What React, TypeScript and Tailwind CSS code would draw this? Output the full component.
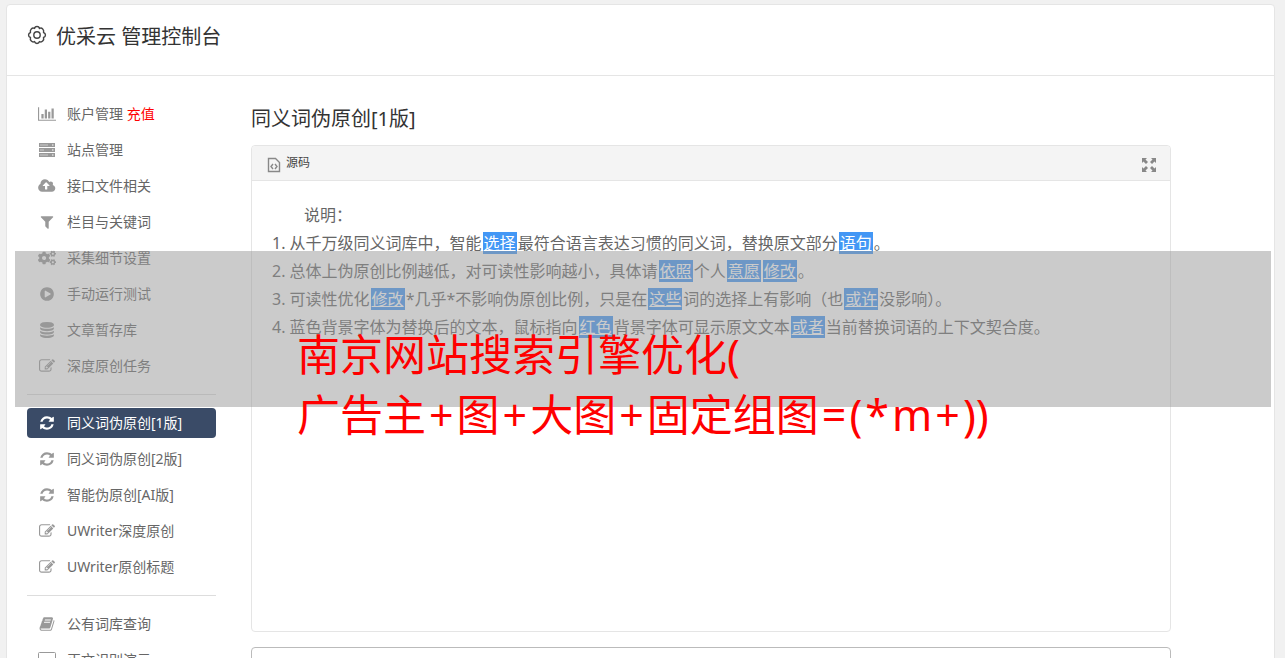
import type { ReactNode } from "react";
import { FaCogs } from "react-icons/fa";

type GlyphProps = {
  d: string;
  box?: string;
};

const Glyph = ({ d, box = "0 0 1792 1792" }: GlyphProps) => (
  <svg viewBox={box} className="h-4 w-[18px]" fill="currentColor" aria-hidden="true">
    <path d={d} />
  </svg>
);

const chart = (
  <Glyph
    box="0 0 2048 1792"
    d="M640 896v512h-256v-512h256zm384-512v1024h-256v-1024h256zm1024 1152v128h-2048v-1536h128v1408h1920zm-640-896v768h-256v-768h256zm384-384v1152h-256v-1152h256z"
  />
);
const server = (
  <Glyph
    box="0 0 18 16"
    d="M1 1h16v4H1zM1 6h16v4H1zM1 11h16v4H1zM2 2.700v.6h8v-.6zM2 7.700v.6h4v-.6zM2 12.700v.6h8v-.6zM14 2.500v1h1.500v-1zM14 7.500v1h1.500v-1zM14 12.500v1h1.500v-1z"
  />
);
const cloud = (
  <Glyph
    box="-64 0 1984 1792"
    d="M1216 864q0-14-9-23l-352-352q-9-9-23-9t-23 9l-351 351q-10 12-10 24 0 14 9 23t23 9h224v352q0 13 9.5 22.5t22.5 9.5h192q13 0 22.5-9.5t9.5-22.5v-352h224q13 0 22.5-9.5t9.5-22.5zm640 288q0 159-112.5 271.5t-271.5 112.5h-1088q-185 0-316.5-131.5t-131.5-316.5q0-130 70-240t188-165q-2-30-2-43 0-212 150-362t362-150q156 0 285.5 87t188.5 231q71-62 166-62 106 0 181 75t75 181q0 76-41 138 130 31 213.5 135.5t83.5 238.5z"
  />
);
const filter = (
  <Glyph d="M1595 295q17 41-14 70l-493 493v742q0 42-39 59-13 5-25 5-27 0-45-19l-256-256q-19-19-19-45v-486l-493-493q-31-29-14-70 17-39 59-39h1280q42 0 59 39z" />
);
const play = (
  <Glyph d="M896 128q209 0 385.5 103t279.5 279.5 103 385.5-103 385.5-279.5 279.5-385.5 103-385.5-103-279.5-279.5-103-385.5 103-385.5 279.5-279.5 385.5-103zm384 823q32-18 32-55t-32-55l-544-320q-31-19-64-1-32 19-32 56v640q0 37 32 56 16 8 32 8 17 0 32-9z" />
);
const database = (
  <Glyph d="M896 768q237 0 443-43t325-127v170q0 69-103 128t-280 93.5-385 34.5-385-34.5-280-93.5-103-128v-170q119 84 325 127t443 43zm0 768q237 0 443-43t325-127v170q0 69-103 128t-280 93.5-385 34.5-385-34.5-280-93.5-103-128v-170q119 84 325 127t443 43zm0-384q237 0 443-43t325-127v170q0 69-103 128t-280 93.5-385 34.5-385-34.5-280-93.5-103-128v-170q119 84 325 127t443 43zm0-1152q208 0 385 34.5t280 93.5 103 128v128q0 69-103 128t-280 93.5-385 34.5-385-34.5-280-93.5-103-128v-128q0-69 103-128t280-93.5 385-34.5z" />
);
const edit = (
  <Glyph d="M888 1184l116-116-152-152-116 116v56h96v96h56zm440-720q-16-16-33 1l-350 350q-17 17-1 33t33-1l350-350q17-17 1-33zm80 594v190q0 119-84.5 203.5t-203.5 84.5h-832q-119 0-203.5-84.5t-84.5-203.5v-832q0-119 84.5-203.5t203.5-84.5h832q63 0 117 25 15 7 18 23 3 17-9 29l-49 49q-14 14-32 8-23-6-45-6h-832q-66 0-113 47t-47 113v832q0 66 47 113t113 47h832q66 0 113-47t47-113v-126q0-13 9-22l64-64q15-15 35-7t20 29zm-96-738l288 288-672 672h-288v-288zm444 132l-92 92-288-288 92-92q28-28 68-28t68 28l152 152q28 28 28 68t-28 68z" />
);
const refresh = (
  <Glyph d="M1639 1056q0 5-1 7-64 268-268 434.5t-478 166.5q-146 0-282.5-55t-243.5-157l-129 129q-19 19-45 19t-45-19-19-45v-448q0-26 19-45t45-19h448q26 0 45 19t19 45-19 45l-137 137q71 66 161 102t187 36q134 0 250-65t186-179q11-17 53-117 8-23 30-23h192q13 0 22.5 9.5t9.5 22.5zm25-800v448q0 26-19 45t-45 19h-448q-26 0-45-19t-19-45 19-45l138-138q-148-137-349-137-134 0-250 65t-186 179q-11 17-53 117-8 23-30 23h-199q-13 0-22.5-9.5t-9.5-22.5v-7q65-268 270-434.5t480-166.5q146 0 284 55.5t245 156.5l130-129q19-19 45-19t45 19 19 45z" />
);
const book = (
  <Glyph d="M1703 478q40 57 18 129l-275 906q-19 64-76.5 107.5t-122.5 43.5h-923q-77 0-148.5-53.5t-99.5-131.5q-24-67-2-127 0-4 3-27t4-37q1-8-3-21.5t-3-19.5q2-11 8-21t16.5-23.5 16.5-23.5q23-38 45-91.5t30-91.5q3-10 .5-30t-.5-28q3-11 17-28t17-23q21-36 42-92t25-90q1-9-2.5-32t.5-28q4-13 22-30.5t22-22.5q19-26 42.5-84.5t27.5-96.5q1-8-3-25.5t-2-26.5q2-8 9-18t18-23 17-21q8-12 16.5-30.5t15-35 16-36 19.5-32 26.5-23.5 36-11.5 47.5 5.5l-1 3q38-9 51-9h761q74 0 114 56t18 130l-274 906q-36 119-71.5 153.5t-128.5 34.5h-869q-27 0-38 15-11 16-1 43 24 70 144 70h923q29 0 56-15.5t35-41.5l300-987q7-22 5-57 38 15 59 43zm-1064 2q-4 13 2 22.5t20 9.5h608q13 0 25.5-9.5t16.5-22.5l21-64q4-13-2-22.5t-20-9.5h-608q-13 0-25.5 9.5t-16.5 22.5zm-83 256q-4 13 2 22.5t20 9.5h608q13 0 25.5-9.5t16.5-22.5l21-64q4-13-2-22.5t-20-9.5h-608q-13 0-25.5 9.5t-16.5 22.5z" />
);
const laptop = (
  <svg viewBox="0 0 18 16" className="h-4 w-[18px]" fill="none" stroke="currentColor" aria-hidden="true">
    <rect x="0.5" y="0.5" width="17" height="11" rx="1" />
    <path d="M0 14h18" strokeWidth="2" />
  </svg>
);

type NavItemProps = {
  icon: ReactNode;
  label: string;
  extra?: string;
  active?: boolean;
};

const NavItem = ({ icon, label, extra, active }: NavItemProps) => (
  <li>
    <a
      href="#"
      aria-current={active ? "page" : undefined}
      className={
        active
          ? "flex h-[30px] items-center rounded bg-[#3a4b67] px-[11px] text-white"
          : "flex h-[30px] items-center rounded px-[11px] text-[#666]"
      }
    >
      <span className={active ? "mr-[11px] text-white" : "mr-[11px] text-[#999]"}>
        {icon}
      </span>
      <span className="pb-0.5 whitespace-nowrap">
        {label} {extra && <span className="text-[#f00]">{extra}</span>}
      </span>
    </a>
  </li>
);

const groups: NavItemProps[][] = [
  [
    { icon: chart, label: "账户管理", extra: "充值" },
    { icon: server, label: "站点管理" },
    { icon: cloud, label: "接口文件相关" },
    { icon: filter, label: "栏目与关键词" },
    { icon: <FaCogs className="h-4 w-[18px]" />, label: "采集细节设置" },
    { icon: play, label: "手动运行测试" },
    { icon: database, label: "文章暂存库" },
    { icon: edit, label: "深度原创任务" },
  ],
  [
    { icon: refresh, label: "同义词伪原创[1版]", active: true },
    { icon: refresh, label: "同义词伪原创[2版]" },
    { icon: refresh, label: "智能伪原创[AI版]" },
    { icon: edit, label: "UWriter深度原创" },
    { icon: edit, label: "UWriter原创标题" },
  ],
  [
    { icon: book, label: "公有词库查询" },
    { icon: laptop, label: "正文识别演示" },
  ],
];

const Word = ({ children }: { children: ReactNode }) => (
  <span className="mx-px bg-[#4397f5] px-px text-white underline">{children}</span>
);

const Op = ({ children }: { children: ReactNode }) => (
  <span className="mx-[3px]">{children}</span>
);

const Header = () => (
  <header className="flex h-[71px] items-start border-b border-[#e5e5e5] px-5 pt-4">
    <svg
      viewBox="0 0 20 20"
      className="mt-1 mr-[9px] h-5 w-5"
      fill="none"
      stroke="#444"
      strokeWidth="1.4"
      strokeLinejoin="round"
      aria-hidden="true"
    >
      <path d="M7.500 3.500C8.200 .9 11.800 .9 12.500 3.500C14.800 2.100 17.400 4.700 16.500 7.500C19.100 8.200 19.100 11.800 16.500 12.500C17.400 15.300 14.800 17.900 12.500 16.500C11.800 19.100 8.200 19.100 7.500 16.500C5.200 17.900 2.600 15.300 3.500 12.500C.9 11.800 .9 8.200 3.500 7.500C2.600 4.700 5.200 2.100 7.500 3.500Z" />
      <circle cx="10" cy="10" r="3.2" />
    </svg>
    <h1 className="text-[20px] leading-8 text-[#333]">优采云 管理控制台</h1>
  </header>
);

const Editor = () => (
  <section className="h-[487px] rounded border border-[#e5e5e5]">
    <div className="flex h-[35px] items-center justify-between rounded-t border-b border-[#e5e5e5] bg-[#f4f4f4] px-[14px]">
      <button type="button" className="flex items-center gap-1 text-[12px] text-[#444]">
        <svg viewBox="0 0 16 16" className="mt-1 h-4 w-4" fill="none" stroke="#888" aria-hidden="true">
          <path d="M2.500 1.500h7l4 4v9h-11z" strokeWidth="1.400" />
          <path d="M7 7L5 9.500 7 12M9 7l2 2.500L9 12" strokeWidth="1.400" />
        </svg>
        源码
      </button>
      <button type="button" aria-label="全屏" className="mt-1">
        <svg viewBox="0 0 14 14" className="h-[14px] w-[14px]" fill="#888" aria-hidden="true">
          <path d="M0 0h5L3.500 1.500 6 4 4 6 1.500 3.500 0 5zM14 0v5l-1.500-1.500L10 6 8 4l2.500-2.500L9 0zM0 14V9l1.500 1.500L4 8l2 2-2.500 2.500L5 14zM14 14H9l1.500-1.500L8 10l2-2 2.500 2.500L14 9z" />
        </svg>
      </button>
    </div>
    <div className="px-5 pt-5 text-[16px] leading-7 text-[#666]">
      <p className="indent-8">说明：</p>
      <p>
        1. 从千万级同义词库中，智能<Word>选择</Word>最符合语言表达习惯的同义词，替换原文部分<Word>语句</Word>。
      </p>
      <p>
        2. 总体上伪原创比例越低，对可读性影响越小，具体请<Word>依照</Word>个人<Word>意愿</Word>
        <Word>修改</Word>。
      </p>
      <p>
        3. 可读性优化<Word>修改</Word>*几乎*不影响伪原创比例，只是在<Word>这些</Word>词的选择上有影响（也<Word>或许</Word>没影响）。
      </p>
      <p>
        4. 蓝色背景字体为替换后的文本，鼠标指向<Word>红色</Word>背景字体可显示原文文本<Word>或者</Word>当前替换词语的上下文契合度。
      </p>
    </div>
  </section>
);

export default function App() {
  return (
    <div className="relative h-screen overflow-hidden bg-[#f1f1f1] px-[10px] pt-1 pl-[6px] font-['Noto_Sans','Noto_Sans_CJK_SC',sans-serif]">
      <div className="min-h-screen rounded-t border border-[#e5e5e5] bg-white">
        <Header />
        <div className="flex pr-[103px] pl-5">
          <nav className="mt-[23px] w-[189px] shrink-0 text-[14px]">
            {groups.map((items, i) => (
              <ul
                key={i}
                className={
                  i > 0
                    ? "mt-[13px] flex flex-col gap-[6px] border-t border-[#ddd] pt-[13px]"
                    : "flex flex-col gap-[6px]"
                }
              >
                {items.map((item) => (
                  <NavItem key={item.label} {...item} />
                ))}
              </ul>
            ))}
          </nav>
          <main className="ml-[35px] min-w-0 flex-1 pt-7">
            <h2 className="mb-[11px] text-[20px] leading-[30px] text-[#333]">同义词伪原创[1版]</h2>
            <Editor />
            <textarea
              aria-label="原文"
              className="mt-[15px] block h-40 w-full resize-none rounded border border-[#bbb] p-2"
            />
          </main>
        </div>
      </div>

      {/* translucent caption band over the page */}
      <div className="pointer-events-none absolute top-[251px] right-[14px] left-[15px] h-[156px] bg-[#979797]/50" />
      <p className="pointer-events-none absolute top-[325px] left-[297px] text-[43px] leading-[60px] whitespace-nowrap text-[#f00]">
        南京网站搜索引擎优化(
        <br />
        广告主<Op>+</Op>图<Op>+</Op>大图<Op>+</Op>固定组图<Op>=</Op>(<Op>*</Op>m<Op>+</Op>))
      </p>
    </div>
  );
}
